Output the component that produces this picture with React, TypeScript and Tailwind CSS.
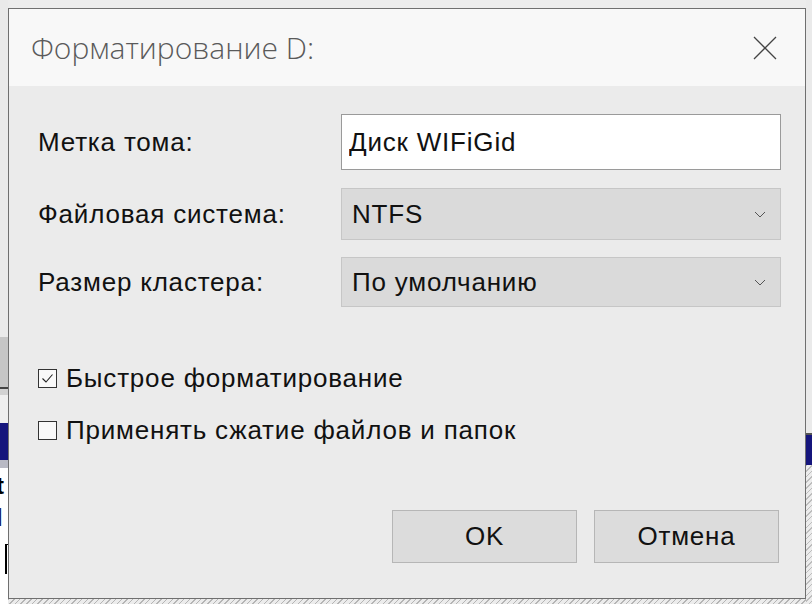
import React, { useState } from 'react';

const Chevron = () => (
  <svg width="12" height="7" viewBox="0 0 12 7" className="text-[#555]">
    <path d="M1 1l5 5 5-5" fill="none" stroke="currentColor" strokeWidth="1" />
  </svg>
);

const Check = ({ checked, label, onToggle }: { checked: boolean; label: string; onToggle: () => void }) => (
  <button type="button" onClick={onToggle} className="flex items-center gap-[9px] text-left">
    <span className="w-[19px] h-[19px] border border-[#333] bg-[#f9f9f9] flex items-center justify-center">
      {checked && (
        <svg width="13" height="11" viewBox="0 0 13 11">
          <path d="M1.5 5.5l3.5 3.5 6.5-7.5" fill="none" stroke="#222" strokeWidth="1.1" />
        </svg>
      )}
    </span>
    <span className="text-[26px] tracking-[0.8px] leading-none text-[#111]">{label}</span>
  </button>
);

const App = () => {
  const [label, setLabel] = useState('Диск WIFiGid');
  const [quick, setQuick] = useState(true);
  const [compress, setCompress] = useState(false);

  return (
    <div
      className="w-[812px] h-[604px] flex overflow-hidden bg-[#ececec]"
      style={{ fontFamily: '"Liberation Sans", Arial, sans-serif' }}
    >
      {/* window behind, left edge */}
      <div className="w-[8px] flex flex-col shrink-0">
        <div className="h-[337px] bg-[#eaeaea]" />
        <div className="h-[50px] bg-[#c6c6c6]" />
        <div className="h-[2px] bg-[#444]" />
        <div className="h-[6px] bg-[#d2d2d2]" />
        <div className="h-[28px] bg-[#efefef]" />
        <div className="h-[37px] bg-[#15157c]" />
        <div className="h-[8px] bg-[#b9bac4]" />
        <div className="flex-1 bg-white flex flex-col overflow-hidden">
          <span className="mt-[6px] -ml-[4px] font-bold text-[24px] leading-[24px] text-black">t</span>
          <span className="mt-[8px] -ml-[4px] font-bold text-[24px] leading-[24px] text-[#1a1a5a]">l</span>
          <div className="mt-[14px] ml-[5px] h-[30px] border-l-2 border-t border-black" />
        </div>
      </div>

      <div className="flex flex-col w-[798px] shrink-0">
        <div className="h-[8px] bg-[#ececec]" />

        {/* dialog */}
        <div className="h-[591px] border border-[#6f6f6f] bg-[#ebebeb] flex flex-col">
          <div className="h-[77px] bg-[#f8f8f8] flex items-center justify-between pl-[22px] pr-[28px]">
            <span
              className="text-[30px] font-light text-[#5a5a5a]"
              style={{ fontFamily: '"Open Sans", "Noto Sans", sans-serif' }}
            >
              Форматирование D:
            </span>
            <button type="button" className="w-[24px] h-[24px]">
              <svg width="24" height="24" viewBox="0 0 24 24">
                <path d="M1 1l22 22M23 1L1 23" stroke="#444" strokeWidth="1.3" />
              </svg>
            </button>
          </div>

          <div className="flex-1 flex flex-col pl-[29px] pr-[26px] pt-[28px]">
            <div className="grid grid-cols-[303px_440px] items-center gap-y-[18px]">
              <span className="text-[26px] tracking-[0.8px] text-[#111]">Метка тома:</span>
              <input
                value={label}
                onChange={(e) => setLabel(e.target.value)}
                className="h-[56px] bg-white border border-[#9a9a9a] px-[7px] text-[26px] tracking-[0.8px] text-[#111] outline-none"
              />
              <span className="text-[26px] tracking-[0.8px] text-[#111]">Файловая система:</span>
              <div className="h-[52px] bg-[#dadada] border border-[#c6c6c6] flex items-center justify-between pl-[10px] pr-[14px]">
                <span className="text-[26px] tracking-[0.8px] text-[#111]">NTFS</span>
                <Chevron />
              </div>
              <span className="text-[26px] tracking-[0.8px] text-[#111] -mt-[1px]">Размер кластера:</span>
              <div className="h-[50px] -mt-[1px] bg-[#dadada] border border-[#c6c6c6] flex items-center justify-between pl-[10px] pr-[14px]">
                <span className="text-[26px] tracking-[0.8px] text-[#111]">По умолчанию</span>
                <Chevron />
              </div>
            </div>

            <div className="flex flex-col gap-[26px] mt-[58px]">
              <Check checked={quick} label="Быстрое форматирование" onToggle={() => setQuick(!quick)} />
              <Check checked={compress} label="Применять сжатие файлов и папок" onToggle={() => setCompress(!compress)} />
            </div>

            <div className="flex justify-end gap-[17px] mt-auto mb-[35px]">
              <button type="button" className="w-[185px] h-[53px] bg-[#dcdcdc] border border-[#b6b6b6] text-[26px] tracking-[0.8px] text-[#111]">
                OK
              </button>
              <button type="button" className="w-[185px] h-[53px] bg-[#dcdcdc] border border-[#b6b6b6] text-[26px] tracking-[0.8px] text-[#111]">
                Отмена
              </button>
            </div>
          </div>
        </div>

        <div className="h-[5px] bg-[repeating-linear-gradient(135deg,#b5b5b5_0px,#b5b5b5_1px,#ececec_1px,#ececec_4px)]" />
      </div>

      {/* window behind, right edge */}
      <div className="w-[6px] flex flex-col shrink-0">
        <div className="h-[433px] bg-[#eaeaea]" />
        <div className="h-[2px] bg-[#555]" />
        <div className="h-[30px] bg-[#15157c]" />
        <div className="flex-1 bg-[repeating-linear-gradient(135deg,#bdbdbd_0px,#bdbdbd_1px,#ececec_1px,#ececec_4px)]" />
      </div>
    </div>
  );
};

export default App;
